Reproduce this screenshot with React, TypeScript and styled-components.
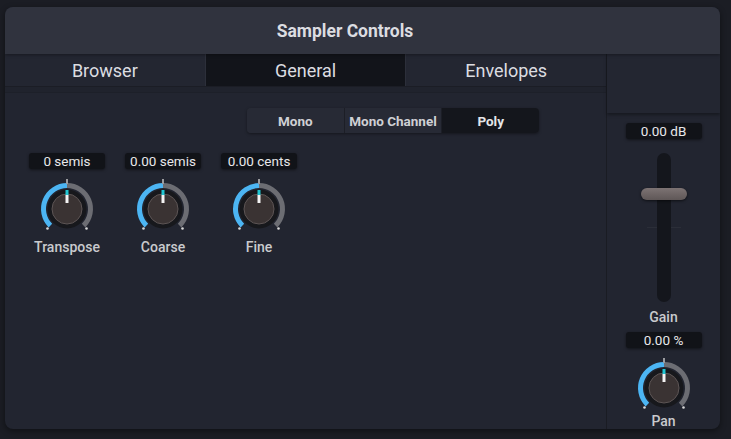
import React from "react";
import styled, { createGlobalStyle } from "styled-components";

const Global = createGlobalStyle`
  html, body { margin: 0; padding: 0; background: #1b1d24; }
  body { font-family: Roboto, "Liberation Sans", sans-serif; }
  * { box-sizing: border-box; }
`;

const Page = styled.div`
  width: 731px;
  height: 439px;
  padding: 7px 11px 10px 5px;
`;

const Panel = styled.div`
  width: 715px;
  height: 422px;
  background: #222530;
  border-radius: 8px;
  overflow: hidden;
  display: flex;
  flex-direction: column;
  box-shadow: 0 2px 6px rgba(0, 0, 0, 0.45);
`;

const Header = styled.div`
  height: 47px;
  flex: none;
  background: #30333e;
  display: flex;
  align-items: center;
  justify-content: center;
  padding-right: 35px;
  color: #dcdde1;
  font-weight: 700;
  font-size: 17.5px;
  box-shadow: 0 1px 3px rgba(0, 0, 0, 0.35);
  position: relative;
  z-index: 1;
`;

const Body = styled.div`
  flex: 1;
  display: flex;
  min-height: 0;
`;

const Main = styled.div`
  width: 601px;
  display: flex;
  flex-direction: column;
`;

const Tabs = styled.div`
  height: 33px;
  display: flex;
  border-bottom: 1px solid #1b1d25;
`;

const Tab = styled.div<{ $active?: boolean }>`
  flex: 1;
  display: flex;
  align-items: center;
  justify-content: center;
  font-size: 18px;
  color: #dcdde1;
  background: ${(p) => (p.$active ? "#12141a" : "#232631")};
  & + & { border-left: 1px solid #2c2f3a; }
`;

const TabStrip = styled.div`
  height: 6px;
  background: #20232d;
  border-bottom: 1px solid #1d2029;
`;

const Content = styled.div`
  flex: 1;
  padding: 15px 0 0 24px;
  display: flex;
  flex-direction: column;
`;

const Segmented = styled.div`
  margin-left: 218px;
  width: 292px;
  height: 25px;
  display: flex;
  border-radius: 4px;
  overflow: hidden;
  background: #272a35;
  box-shadow: 0 1px 3px rgba(0, 0, 0, 0.4);
`;

const Segment = styled.div<{ $active?: boolean }>`
  flex: 1;
  display: flex;
  align-items: center;
  justify-content: center;
  font-size: 13.5px;
  font-weight: 700;
  color: ${(p) => (p.$active ? "#e4e5e8" : "#cfd0d4")};
  background: ${(p) => (p.$active ? "#14161c" : "#272a35")};
  & + & { border-left: 1px solid #1c1e26; }
`;

const KnobRow = styled.div`
  margin-top: 20px;
  display: flex;
  gap: 20px;
`;

const KnobGroup = styled.div`
  width: 76px;
  display: flex;
  flex-direction: column;
  align-items: center;
`;

const ValueBox = styled.div`
  width: 76px;
  height: 16px;
  border-radius: 3px;
  background: #111318;
  color: #e8e8ea;
  font-size: 13.5px;
  line-height: 16px;
  text-align: center;
  box-shadow: 0 1px 3px rgba(0, 0, 0, 0.5);
`;

const KnobSvg = styled.svg`
  display: block;
  margin-top: 10px;
  flex: none;
`;

const Label = styled.div<{ $overlap?: boolean }>`
  font-size: 14px;
  line-height: 16px;
  color: #c9cacd;
  font-weight: 500;
  margin-top: ${(p) => (p.$overlap ? "-5px" : "0")};
`;

const Side = styled.div`
  width: 114px;
  border-left: 1px solid #1a1c23;
  display: flex;
  flex-direction: column;
  align-items: center;
`;

const SideTop = styled.div`
  align-self: stretch;
  height: 59px;
  background: #232631;
  box-shadow: 0 2px 3px rgba(0, 0, 0, 0.35);
  margin-bottom: 10px;
`;

const Track = styled.div`
  position: relative;
  margin-top: 14px;
  width: 14px;
  height: 150px;
  border-radius: 7px;
  background: #14161c;
`;

const CenterMark = styled.div`
  position: absolute;
  left: -10px;
  top: 74px;
  width: 34px;
  height: 1px;
  background: linear-gradient(
    to right,
    #2b2e38 10px,
    transparent 10px,
    transparent 24px,
    #2b2e38 24px
  );
`;

const Thumb = styled.div`
  position: absolute;
  left: -16px;
  top: 35px;
  width: 46px;
  height: 12px;
  border-radius: 6px;
  background: linear-gradient(#7d7373, #5f5757);
  box-shadow: 0 1px 3px rgba(0, 0, 0, 0.6);
`;

const GainLabel = styled(Label)`
  margin-top: 7px;
  margin-bottom: 7px;
`;

function polar(r: number, deg: number) {
  const a = ((deg - 90) * Math.PI) / 180;
  return [30 + r * Math.cos(a), 30 + r * Math.sin(a)];
}

function arc(r: number, from: number, to: number) {
  const [x1, y1] = polar(r, from);
  const [x2, y2] = polar(r, to);
  const large = to - from > 180 ? 1 : 0;
  return `M ${x1} ${y1} A ${r} ${r} 0 ${large} 1 ${x2} ${y2}`;
}

const Knob: React.FC = () => {
  const [lx, ly] = polar(27.6, -135);
  const [rx, ry] = polar(27.6, 135);
  return (
    <KnobSvg width={60} height={60} viewBox="0 0 60 60">
      <path d={arc(23.5, 0, 135)} stroke="#6c6d73" strokeWidth={5} fill="none" />
      <path d={arc(23.5, -135, 0)} stroke="#4cb5f3" strokeWidth={5} fill="none" />
      <circle cx={30} cy={30} r={19.5} fill="#17181c" />
      <circle cx={30} cy={30} r={15} fill="#3a3333" stroke="#5d5555" strokeWidth={1} />
      <rect x={29} y={0} width={2} height={5} fill="#9a9b9f" />
      <rect x={28.5} y={11} width={3} height={5} fill="#20c6d2" />
      <rect x={28.5} y={16} width={3} height={8} fill="#f4f4f4" />
      <circle cx={lx} cy={ly} r={1.3} fill="#d8d8d8" />
      <circle cx={rx} cy={ry} r={1.3} fill="#d8d8d8" />
    </KnobSvg>
  );
};

const knobs = [
  { value: "0 semis", label: "Transpose" },
  { value: "0.00 semis", label: "Coarse" },
  { value: "0.00 cents", label: "Fine" },
];

export default function App() {
  return (
    <Page>
      <Global />
      <Panel>
        <Header>Sampler Controls</Header>
        <Body>
          <Main>
            <Tabs>
              <Tab>Browser</Tab>
              <Tab $active>General</Tab>
              <Tab>Envelopes</Tab>
            </Tabs>
            <TabStrip />
            <Content>
              <Segmented>
                <Segment>Mono</Segment>
                <Segment>Mono Channel</Segment>
                <Segment $active>Poly</Segment>
              </Segmented>
              <KnobRow>
                {knobs.map((k) => (
                  <KnobGroup key={k.label}>
                    <ValueBox>{k.value}</ValueBox>
                    <Knob />
                    <Label>{k.label}</Label>
                  </KnobGroup>
                ))}
              </KnobRow>
            </Content>
          </Main>
          <Side>
            <SideTop />
            <ValueBox>0.00 dB</ValueBox>
            <Track>
              <CenterMark />
              <Thumb />
            </Track>
            <GainLabel>Gain</GainLabel>
            <ValueBox>0.00 %</ValueBox>
            <Knob />
            <Label $overlap>Pan</Label>
          </Side>
        </Body>
      </Panel>
    </Page>
  );
}
